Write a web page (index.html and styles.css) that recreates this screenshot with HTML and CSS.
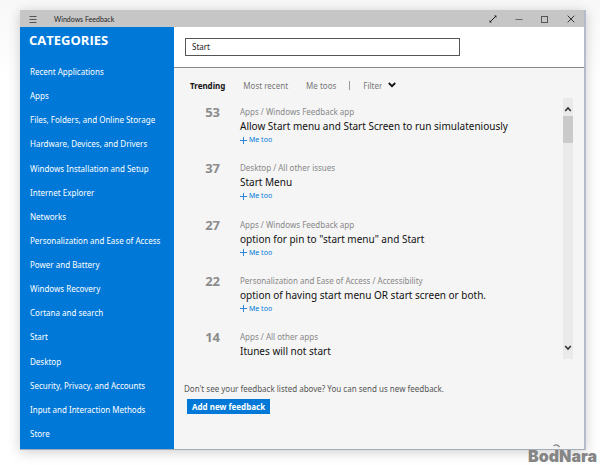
FILE: index.html
```html
<!DOCTYPE html>
<html lang="en">
<head>
    <meta charset="UTF-8">
    <meta name="viewport" content="width=device-width, initial-scale=1.0">
    <title>Windows Feedback</title>
    <link rel="stylesheet" href="styles.css">
</head>
<body>
    <div class="window">
        <header class="titlebar">
            <button class="title-btn" aria-label="Menu">
                <svg width="8" height="8" viewBox="0 0 8 8"><path d="M0.5 1.5h7M0.5 4.5h7M0.5 7.5h7" stroke="#555"/></svg>
            </button>
            <span class="title">Windows Feedback</span>
            <div class="controls">
                <button class="title-btn" aria-label="Full screen">
                    <svg width="8" height="8" viewBox="0 0 8 8"><path d="M1 7L7 1" stroke="#222"/><path d="M5 0.6H7.4V3zM0.6 5V7.4H3z" fill="#222"/></svg>
                </button>
                <button class="title-btn" aria-label="Minimize">
                    <svg width="8" height="8" viewBox="0 0 8 8"><path d="M0.5 4.5h7" stroke="#666"/></svg>
                </button>
                <button class="title-btn" aria-label="Maximize">
                    <svg width="8" height="8" viewBox="0 0 8 8"><rect x="0.5" y="1.5" width="6" height="6" fill="none" stroke="#555"/></svg>
                </button>
                <button class="title-btn" aria-label="Close">
                    <svg width="8" height="8" viewBox="0 0 8 8"><path d="M0.7 0.7L7.3 7.3M7.3 0.7L0.7 7.3" stroke="#333"/></svg>
                </button>
            </div>
        </header>

        <div class="content">
            <!-- Categories -->
            <aside class="sidebar">
                <h1>CATEGORIES</h1>
                <nav class="categories">
                    <a href="#">Recent Applications</a>
                    <a href="#">Apps</a>
                    <a href="#">Files, Folders, and Online Storage</a>
                    <a href="#">Hardware, Devices, and Drivers</a>
                    <a href="#">Windows Installation and Setup</a>
                    <a href="#">Internet Explorer</a>
                    <a href="#">Networks</a>
                    <a href="#">Personalization and Ease of Access</a>
                    <a href="#">Power and Battery</a>
                    <a href="#">Windows Recovery</a>
                    <a href="#">Cortana and search</a>
                    <a href="#">Start</a>
                    <a href="#">Desktop</a>
                    <a href="#">Security, Privacy, and Accounts</a>
                    <a href="#">Input and Interaction Methods</a>
                    <a href="#">Store</a>
                </nav>
            </aside>

            <main class="main">
                <form class="search">
                    <input type="text" aria-label="Search feedback" value="Start" autofocus>
                </form>

                <div class="tabs">
                    <button class="tab active">Trending</button>
                    <button class="tab">Most recent</button>
                    <button class="tab">Me toos</button>
                    <span class="divider"></span>
                    <label class="filter">
                        <select aria-label="Filter"><option>Filter</option></select>
                        <svg width="8" height="6" viewBox="0 0 8 6"><path d="M0.8 1L4 4.2L7.2 1" fill="none" stroke="#111" stroke-width="1.8"/></svg>
                    </label>
                </div>

                <!-- Feedback list -->
                <div class="results">
                    <ul class="list">
                        <li class="item">
                            <span class="votes">53</span>
                            <div>
                                <p class="path">Apps / Windows Feedback app</p>
                                <h2>Allow Start menu and Start Screen to run simulateniously</h2>
                                <button class="metoo"><svg width="7" height="7" viewBox="0 0 7 7"><path d="M3.5 0v7M0 3.5h7" stroke="#2a8ae0"/></svg>Me too</button>
                            </div>
                        </li>
                        <li class="item">
                            <span class="votes">37</span>
                            <div>
                                <p class="path">Desktop / All other issues</p>
                                <h2>Start Menu</h2>
                                <button class="metoo"><svg width="7" height="7" viewBox="0 0 7 7"><path d="M3.5 0v7M0 3.5h7" stroke="#2a8ae0"/></svg>Me too</button>
                            </div>
                        </li>
                        <li class="item">
                            <span class="votes">27</span>
                            <div>
                                <p class="path">Apps / Windows Feedback app</p>
                                <h2>option for pin to "start menu" and Start</h2>
                                <button class="metoo"><svg width="7" height="7" viewBox="0 0 7 7"><path d="M3.5 0v7M0 3.5h7" stroke="#2a8ae0"/></svg>Me too</button>
                            </div>
                        </li>
                        <li class="item">
                            <span class="votes">22</span>
                            <div>
                                <p class="path">Personalization and Ease of Access / Accessibility</p>
                                <h2>option of having start menu OR start screen or both.</h2>
                                <button class="metoo"><svg width="7" height="7" viewBox="0 0 7 7"><path d="M3.5 0v7M0 3.5h7" stroke="#2a8ae0"/></svg>Me too</button>
                            </div>
                        </li>
                        <li class="item">
                            <span class="votes">14</span>
                            <div>
                                <p class="path">Apps / All other apps</p>
                                <h2>Itunes will not start</h2>
                            </div>
                        </li>
                    </ul>
                    <div class="scrollbar">
                        <button aria-label="Scroll up"><svg width="8" height="6" viewBox="0 0 8 6"><path d="M1.2 5L4 2L6.8 5" fill="none" stroke="#333" stroke-width="1.6"/></svg></button>
                        <div class="thumb"></div>
                        <button class="down" aria-label="Scroll down"><svg width="8" height="6" viewBox="0 0 8 6"><path d="M1.2 1L4 4L6.8 1" fill="none" stroke="#333" stroke-width="1.6"/></svg></button>
                    </div>
                </div>

                <footer class="add">
                    <p>Don't see your feedback listed above? You can send us new feedback.</p>
                    <button class="add-btn">Add new feedback</button>
                </footer>
            </main>
        </div>
    </div>

    <div class="watermark">
        <svg width="8" height="4" viewBox="0 0 8 4"><path d="M0.5 2Q4 -0.5 6.5 3" fill="none" stroke="#888" stroke-width="1.3"/></svg>
        <span>BodNara</span>
    </div>

    <script>
        // Put the caret after the search text
        const search = document.querySelector(".search input");
        search.focus();
        search.setSelectionRange(search.value.length, search.value.length);
    </script>
</body>
</html>
```

FILE: styles.css
```css
* {
    box-sizing: border-box;
}

body {
    margin: 0;
    min-height: 100vh;
    padding: 10px 14px 15px 20px;
    display: flex;
    background: linear-gradient(to bottom, #f8f8f8, #ffffff 80px);
    font-family: "Noto Sans", sans-serif;
    font-size: 8px;
    color: #222;
}

h1, h2, p, ul {
    margin: 0;
    padding: 0;
}

button, input, select {
    font: inherit;
    color: inherit;
    border: none;
    background: none;
    padding: 0;
}

svg {
    display: block;
}

.window {
    flex: 1;
    display: flex;
    flex-direction: column;
    border-right: 2px solid #b4bccb;
    border-bottom: 1px solid #a4abb8;
    background-color: #f5f5f5;
    box-shadow: 0 2px 12px rgba(0, 0, 0, 0.2);
}

/* Title bar */
.titlebar {
    display: flex;
    align-items: center;
    height: 17px;
    padding: 0 9px;
    background-color: #c6c6c6;
}

.title {
    margin-left: 17px;
    font-family: Lato, sans-serif;
    font-size: 7px;
}

.controls {
    display: flex;
    gap: 18px;
    margin-left: auto;
}

.content {
    flex: 1;
    display: flex;
}

/* Sidebar */
.sidebar {
    width: 154px;
    display: flex;
    flex-direction: column;
    padding: 5px 0 3px 9px;
    background-color: #0078d7;
    color: #fff;
}

.sidebar h1 {
    font-family: "Open Sans", sans-serif;
    font-size: 13px;
    line-height: 16px;
    margin-bottom: 12px;
}

.categories {
    flex: 1;
    display: grid;
    grid-auto-rows: 1fr;
    align-items: center;
    padding-left: 1px;
}

.categories a {
    color: #fff;
    line-height: 12px;
    text-decoration: none;
    white-space: nowrap;
}

.categories a:hover {
    text-decoration: underline;
}

/* Main area */
.main {
    flex: 1;
    display: flex;
    flex-direction: column;
}

.search {
    padding: 11px 11px;
    background-color: #fff;
    border-bottom: 1px solid #888;
}

.search input {
    display: block;
    width: 71%;
    height: 18px;
    padding: 0 6px 2px;
    border: 1px solid #555;
    outline: none;
}

.tabs {
    display: flex;
    align-items: center;
    gap: 18px;
    height: 30px;
    padding: 4px 16px 0;
    color: #777;
}

.tab.active {
    font-weight: bold;
    color: #111;
}

.divider {
    width: 1px;
    height: 9px;
    margin: 0 -5px;
    background-color: #999;
}

.filter {
    display: flex;
    align-items: center;
    gap: 6px;
}

.filter select {
    appearance: none;
}

.results {
    flex: 1;
    display: flex;
    padding-right: 11px;
}

.list {
    flex: 1;
    display: flex;
    flex-direction: column;
    justify-content: space-between;
    padding-top: 8px;
    list-style: none;
}

.item {
    display: grid;
    grid-template-columns: 46px 1fr;
    column-gap: 20px;
}

.votes {
    text-align: right;
    font-size: 13px;
    font-weight: bold;
    line-height: 13px;
    color: #8c8c8c;
}

.path {
    line-height: 12px;
    color: #888;
}

.item h2 {
    font-size: 10px;
    font-weight: normal;
    line-height: 16px;
    color: #111;
}

.metoo {
    display: flex;
    align-items: center;
    gap: 2px;
    font-size: 7px;
    line-height: 12px;
    color: #0078d7;
}

.scrollbar {
    width: 10px;
    display: flex;
    flex-direction: column;
    background-color: #eaeaea;
}

.scrollbar button {
    display: flex;
    justify-content: center;
    padding: 8px 0 4px;
}

.scrollbar .down {
    margin-top: auto;
    padding: 4px 0 8px;
}

.thumb {
    height: 27px;
    background-color: #cacaca;
}

.add {
    padding: 24px 10px 35px;
    color: #555;
}

.add p {
    line-height: 12px;
}

.add-btn {
    margin: 4px 3px 0;
    padding: 0 5px;
    background-color: #0078d7;
    color: #fff;
    font-weight: bold;
    line-height: 15px;
}

/* Site mark in the page corner */
.watermark {
    position: absolute;
    right: 3px;
    bottom: 0;
    color: #858585;
    font-family: Inter, sans-serif;
    font-size: 16px;
    font-weight: 900;
    line-height: 17px;
}

.watermark svg {
    margin-left: 25px;
}
```
